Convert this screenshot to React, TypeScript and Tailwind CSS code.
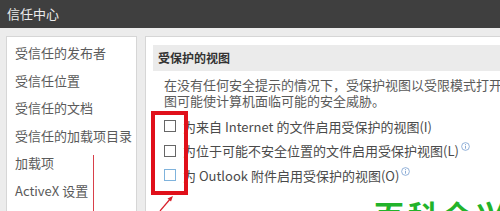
import React from 'react';

const FONT = '"Noto Sans CJK SC", "Noto Sans", sans-serif';

const navItems = ['受信任的发布者', '受信任位置', '受信任的文档', '受信任的加载项目录', '加载项', 'ActiveX 设置'];

const options = [
  { label: '为来自 Internet 的文件启用受保护的视图(I)', info: false, blue: false },
  { label: '为位于可能不安全位置的文件启用受保护视图(L)', info: true, blue: false },
  { label: '为 Outlook 附件启用受保护的视图(O)', info: true, blue: true },
];

const InfoIcon: React.FC = () => (
  <svg width="9" height="9" viewBox="0 0 10 10" className="ml-[2px] -mt-[8px] shrink-0">
    <circle cx="5" cy="5" r="4.3" fill="none" stroke="#7aa0d0" strokeWidth="0.9" />
    <line x1="5" y1="4.2" x2="5" y2="7.4" stroke="#7aa0d0" strokeWidth="1" />
    <circle cx="5" cy="2.8" r="0.6" fill="#7aa0d0" />
  </svg>
);

const App: React.FC = () => {
  return (
    <div className="relative w-[500px] h-[211px] overflow-hidden bg-[#ececec]" style={{ fontFamily: FONT }}>
      {/* title bar */}
      <div className="h-[28px] bg-[#3f3f3f] flex items-center pl-[7px] text-[13px] text-[#ececec]">信任中心</div>

      <div className="flex gap-[8px] pl-[6px] pt-[8px]">
        {/* left nav */}
        <div className="w-[131px] h-[190px] bg-white border border-[#d6d6d6] pt-[2px] pl-[8px] flex flex-col text-[13px] text-[#5a5a5a]">
          {navItems.map((item) => (
            <div key={item} className="h-[27.6px] flex items-center whitespace-nowrap">{item}</div>
          ))}
        </div>

        {/* right content */}
        <div className="flex-1 h-[190px] bg-white border border-[#d6d6d6] border-r-0 pl-[7px] pt-[8px] overflow-hidden">
          <div className="h-[26px] bg-[#ebebeb] flex items-center pl-[5px] text-[12px] font-bold text-[#333]">受保护的视图</div>
          <div className="pl-[11px] pt-[6px] text-[13px] leading-[16px] text-[#5a5a5a] whitespace-nowrap">
            <div className="h-[16px]">在没有任何安全提示的情况下，受保护视图以受限模式打开潜在危险的文件。</div>
            <div className="h-[16px]">图可能使计算机面临可能的安全威胁。</div>
          </div>
          <div className="pl-[11px] pt-[5px] flex flex-col text-[13px] text-[#4a4a4a]">
            {options.map((o) => (
              <div key={o.label} className="h-[24.5px] flex items-center whitespace-nowrap">
                <span className={`w-[12px] h-[12px] border bg-white shrink-0 ${o.blue ? 'border-[#7fb3dc]' : 'border-[#666]'}`} />
                <span className="ml-[7px]">{o.label}</span>
                {o.info && <InfoIcon />}
              </div>
            ))}
          </div>
        </div>
      </div>

      {/* red annotations */}
      <div className="absolute left-[151px] top-[111px] w-[37px] h-[84px] border-[4px] border-[#e0101a]" />
      <div className="absolute left-[93px] top-[155px] w-[1px] h-[56px] bg-[#d8404a]" />
      <svg className="absolute left-[155px] top-[194px]" width="24" height="17" viewBox="0 0 24 17">
        <line x1="5" y1="17" x2="16" y2="4" stroke="#d8202a" strokeWidth="1.2" />
        <path d="M18 2 L12.5 4.5 L16 7.5 Z" fill="#d8202a" />
      </svg>

      {/* green watermark */}
      <div className="absolute left-[374px] top-[196px] text-[30px] leading-[36px] font-bold tracking-[4px] text-[#22b32a] whitespace-nowrap">百科全兴</div>
    </div>
  );
};

export default App;
